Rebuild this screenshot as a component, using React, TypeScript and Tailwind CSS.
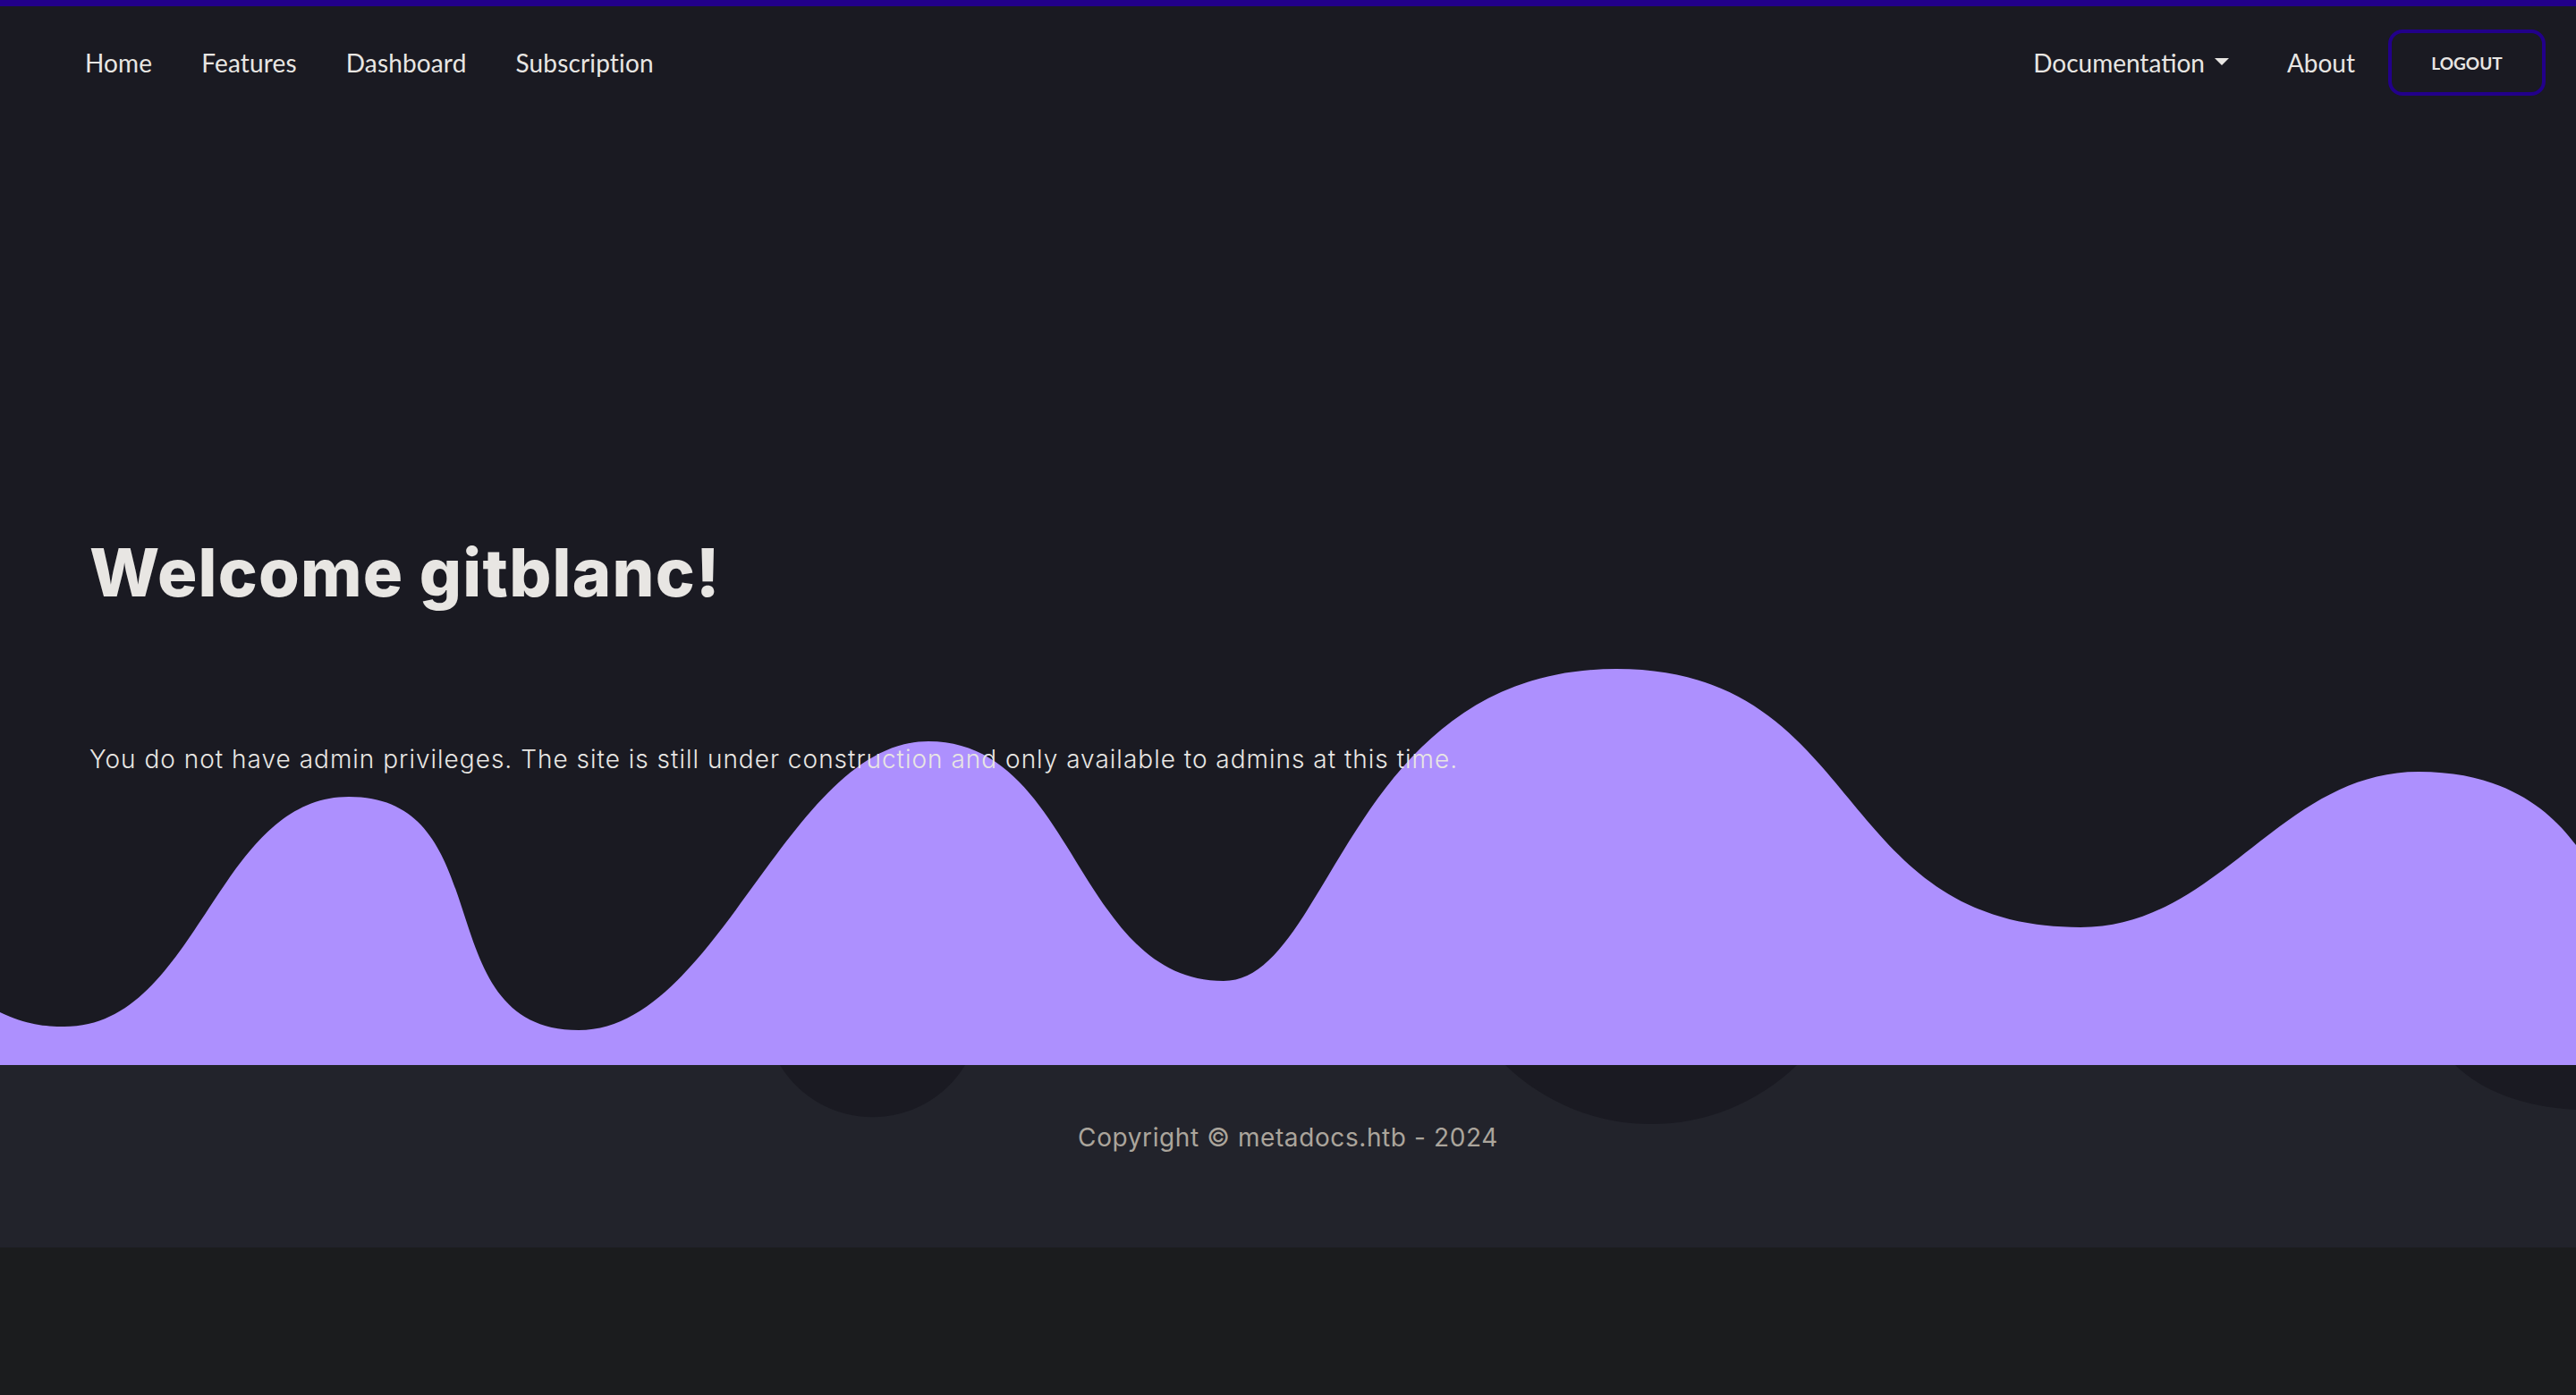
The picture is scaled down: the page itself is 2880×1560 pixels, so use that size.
import React from 'react';

const NAV_LEFT = ['Home', 'Features', 'Dashboard', 'Subscription'];

function Wave() {
  // top edge of the purple band, page coordinates
  const d =
    'M0 1132 C30 1146 50 1148 72 1148 ' +
    'C221 1148 241 891 390 891 ' +
    'C562 891 475 1152 647 1152 ' +
    'C803 1152 882 829 1038 829 ' +
    'C1203 829 1203 1097 1368 1097 ' +
    'C1488 1097 1507 748 1807 748 ' +
    'C2087 748 2046 1037 2326 1037 ' +
    'C2481 1037 2549 863 2704 863 ' +
    'C2800 863 2850 905 2880 945 ' +
    'L2880 1191 L0 1191 Z';
  return (
    <svg
      className="absolute bottom-0 left-0 w-full h-[451px]"
      viewBox="0 740 2880 451"
      preserveAspectRatio="none"
    >
      <path d={d} fill="#ad90fe" />
    </svg>
  );
}

function FooterBlobs() {
  return (
    <svg
      className="absolute top-0 left-0 w-full h-[70px]"
      viewBox="0 1191 2880 70"
      preserveAspectRatio="none"
    >
      <path d="M872 1191 A121 121 0 0 0 1079 1191 Z" fill="#1a1a22" />
      <path d="M1683 1191 A234 234 0 0 0 2009 1191 Z" fill="#1a1a22" />
      <path d="M2745 1191 C2780 1225 2830 1238 2880 1241 L2880 1191 Z" fill="#1a1a22" />
    </svg>
  );
}

export default function App() {
  return (
    <div className="min-h-screen bg-[#1b1c1e]">
      <div className="bg-[#1a1a22] border-t-[7px] border-[#22008a]">
        <nav className="h-[126px] flex items-center justify-between pl-[95px] pr-[34px] font-[Lato] text-[28px] text-[#e8e6e3]">
          <div className="flex items-center gap-[55px] tracking-[0.15px]">
            {NAV_LEFT.map((item) => (
              <a key={item} href="#" className="leading-none">
                {item}
              </a>
            ))}
          </div>
          <div className="flex items-center">
            <a href="#" className="flex items-center leading-none">
              Documentation
              <span className="ml-[11px] mb-[3px] border-t-[8px] border-x-[8px] border-x-transparent border-t-[#e8e6e3]" />
            </a>
            <a href="#" className="ml-[65px] leading-none">
              About
            </a>
            <button className="ml-[37px] w-[176px] h-[74px] border-4 border-[#22008a] rounded-[16px] text-[19px] font-bold leading-none text-[#e8e6e3]">
              LOGOUT
            </button>
          </div>
        </nav>

        <section className="relative h-[1058px] px-[100px] pt-[470px] font-[Inter] text-[#e8e6e3]">
          <Wave />
          <h1 className="relative text-[74px] font-extrabold leading-none tracking-[1.2px]">Welcome gitblanc!</h1>
          <p className="relative mt-[158px] text-[28px] font-light leading-none tracking-[1px]">
            You do not have admin privileges. The site is still under construction and only available to admins at this time.
          </p>
        </section>
      </div>

      <footer className="relative h-[204px] bg-[#22232b] pt-[67px] font-[Inter]">
        <FooterBlobs />
        <p className="relative text-center text-[28px] leading-none tracking-[0.6px] text-[#aba59c]">
          Copyright © metadocs.htb - 2024
        </p>
      </footer>
    </div>
  );
}
